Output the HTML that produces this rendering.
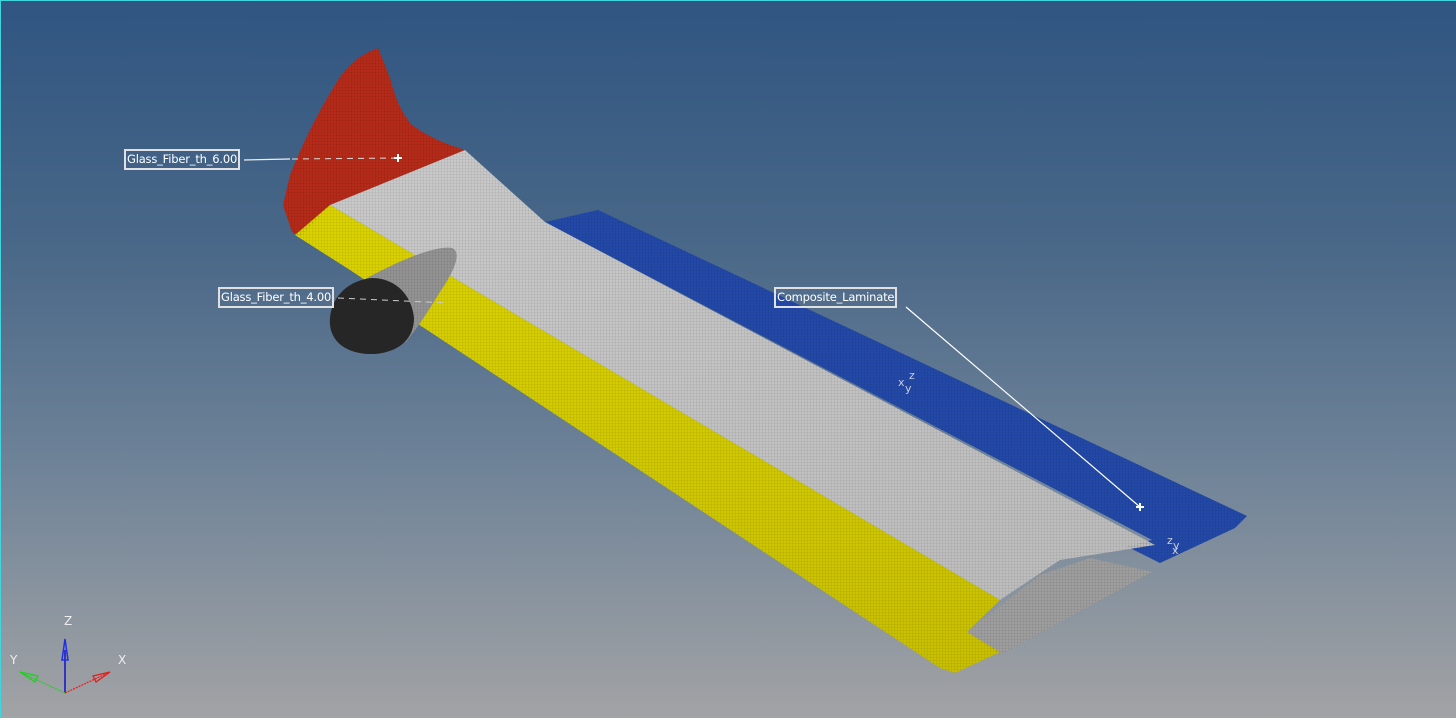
<!DOCTYPE html>
<html><head><meta charset="utf-8"><style>
html,body{margin:0;padding:0}
body{width:1456px;height:718px;overflow:hidden;background:linear-gradient(180deg,#2f5581 0%,#4a6888 35%,#6f8398 65%,#a2a3a5 100%);position:relative;font-family:"DejaVu Sans","Liberation Sans",sans-serif}
.frame{position:absolute;left:0;top:0;width:1455px;height:717px;border-top:1px solid #3fd6e0;border-left:1px solid #3fd6e0}
.lbl{position:absolute;border:2px solid #e0e0e0;color:#fff;font-size:11.5px;line-height:17px;padding:0 1px;white-space:nowrap;letter-spacing:-0.2px}
</style></head><body>
<svg width="1456" height="718" style="position:absolute;left:0;top:0">
<defs>
<pattern id="m" width="3" height="3" patternUnits="userSpaceOnUse"><path d="M0 0H3M0 0V3" stroke="#000" stroke-opacity=".2" stroke-width=".6"/></pattern>
<linearGradient id="gr" x1="0" y1="0" x2="1" y2="1"><stop offset="0" stop-color="#cacaca"/><stop offset="1" stop-color="#bcbcbc"/></linearGradient>
<linearGradient id="yl" x1="0" y1="0" x2="0" y2="1"><stop offset="0" stop-color="#dcd400"/><stop offset="1" stop-color="#c8c000"/></linearGradient>
</defs>
<!-- red tail -->
<path d="M283,205 L290,175 Q310,125 335,85 Q350,58 378,48 L390,78 Q398,110 412,125 Q432,140 465,150 L330,205 L300,237 L292,232 Z" fill="#b52a18"/>
<!-- blue -->
<path d="M545,222 L598,210 L1247,516 L1235,528 L1160,563 L1126,546 L1152,540 Z" fill="#2349a8"/>
<!-- gray top -->
<path d="M330,205 L465,150 L545,222 L1155,545 L1060,560 L1000,600 Z" fill="url(#gr)"/>
<!-- lower gray flap -->
<path d="M967,632 L1040,575 L1090,558 L1152,572 L1000,655 Z" fill="#9e9e9e"/>
<!-- yellow -->
<path d="M295,235 L330,205 L1000,600 L967,632 L1000,652 L955,673 L940,668 L415,322 L380,290 L350,270 Z" fill="url(#yl)"/>
<g fill="url(#m)"><path d="M283,205 L290,175 Q310,125 335,85 Q350,58 378,48 L390,78 Q398,110 412,125 Q432,140 465,150 L330,205 L300,237 L292,232 Z"/><path d="M545,222 L598,210 L1247,516 L1235,528 L1160,563 L1126,546 L1152,540 Z"/><path d="M330,205 L465,150 L545,222 L1155,545 L1060,560 L1000,600 Z"/><path d="M295,235 L330,205 L1000,600 L967,632 L1000,652 L955,673 L940,668 L415,322 L380,290 L350,270 Z"/><path d="M967,632 L1040,575 L1090,558 L1152,572 L1000,655 Z"/></g>
<!-- nacelle -->
<path d="M360,282 C395,262 435,245 452,248 C462,252 455,270 440,292 C430,308 420,325 405,343 L370,300 Z" fill="#939393"/>
<path d="M360,282 C395,262 435,245 452,248 C462,252 455,270 440,292 C430,308 420,325 405,343 L370,300 Z" fill="url(#m)"/>
<path d="M330,318 C332,295 350,280 372,278 C395,278 412,295 414,318 C414,340 398,352 375,354 C345,355 328,340 330,318 Z" fill="#262626"/>
<!-- leader lines -->
<path d="M244,160 L290,159" stroke="#eee" stroke-width="1.2"/>
<path d="M292,159 L398,158" stroke="#ddd" stroke-dasharray="6 5"/>
<path d="M338,298 L447,303" stroke="#ccc" stroke-dasharray="6 5"/>
<path d="M906,307 L1140,507" stroke="#fff" stroke-width="1.2"/>
<path d="M394,158h8M398,154v8M1136,507h8M1140,503v8" stroke="#fff" stroke-width="2"/>
<!-- triad -->
<line x1="65" y1="693" x2="65" y2="650" stroke="#1010d0" stroke-width="1.5"/>
<path d="M62,660 L65,639 L68,660 Z" fill="none" stroke="#2030e0" stroke-width="1.5"/>
<line x1="65" y1="693" x2="20" y2="672" stroke="#20d020" stroke-dasharray="2 1" stroke-width="1.2"/>
<path d="M20,672 L38,676 L35,682 Z" fill="none" stroke="#20d020" stroke-width="1.3"/>
<line x1="65" y1="693" x2="110" y2="672" stroke="#e02020" stroke-dasharray="2 1" stroke-width="1.2"/>
<path d="M110,672 L93,676 L96,682 Z" fill="none" stroke="#e02020" stroke-width="1.3"/>
<g fill="#eee" font-size="12" font-family="DejaVu Sans,sans-serif"><text x="64" y="625">Z</text><text x="10" y="664">Y</text><text x="118" y="664">X</text></g>
<g fill="#ccd" font-size="11" font-family="DejaVu Sans,sans-serif"><text x="898" y="386">x</text><text x="909" y="379">z</text><text x="905" y="392">y</text><text x="1167" y="544">z</text><text x="1173" y="549">y</text><text x="1172" y="554">x</text></g>
</svg>
<div class="frame"></div>
<div class="lbl" style="left:124px;top:149px">Glass_Fiber_th_6.00</div>
<div class="lbl" style="left:218px;top:287px">Glass_Fiber_th_4.00</div>
<div class="lbl" style="left:774px;top:287px">Composite_Laminate</div>
</body></html>
